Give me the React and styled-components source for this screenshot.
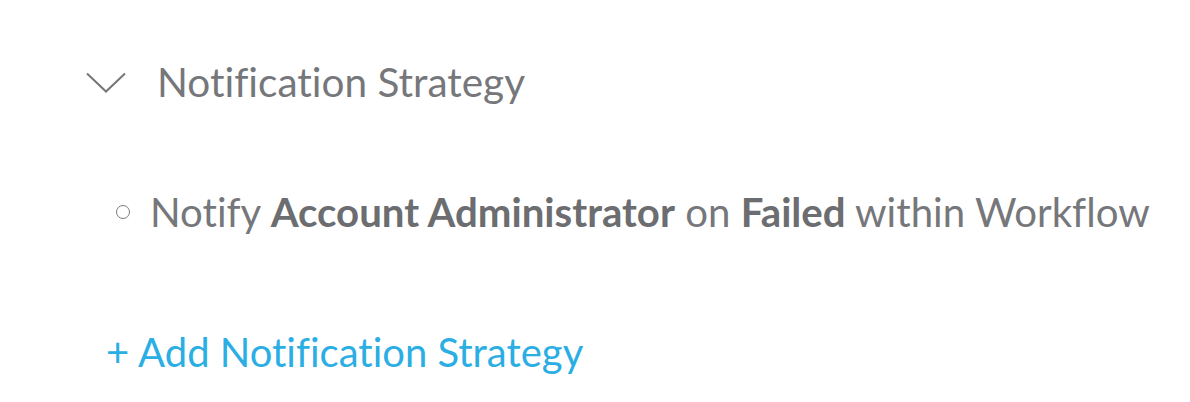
import React from 'react'
import styled, { createGlobalStyle } from 'styled-components'

const GlobalStyle = createGlobalStyle`
  html, body {
    margin: 0;
    padding: 0;
    background: #ffffff;
  }
  body {
    font-family: Lato, "Open Sans", sans-serif;
    font-variant-ligatures: none;
  }
`

const Panel = styled.div`
  width: 1190px;
  height: 402px;
  box-sizing: border-box;
  padding: 58px 0 0 86px;
  display: flex;
  flex-direction: column;
`

const Header = styled.div`
  display: flex;
  align-items: center;
  height: 48px;
`

const Chevron = styled.svg`
  width: 40px;
  height: 21px;
  margin-right: 31px;
  flex-shrink: 0;
`

const Title = styled.span`
  font-size: 40.5px;
  color: #76777b;
  line-height: 48px;
`

const StrategyList = styled.ul`
  list-style: none;
  margin: 82px 0 0 0;
  padding: 0 0 0 30px;
`

const StrategyItem = styled.li`
  display: flex;
  align-items: center;
  font-size: 40.2px;
  line-height: 48px;
  color: #76777b;
`

const Bullet = styled.span`
  box-sizing: border-box;
  width: 14px;
  height: 14px;
  border: 1.6px solid #7a7b7f;
  border-radius: 50%;
  margin-right: 20px;
  flex-shrink: 0;
`

const Strong = styled.b`
  font-weight: 700;
  color: #6c6d70;
`

const AddLink = styled.a`
  margin: 92px 0 0 20px;
  font-size: 40px;
  line-height: 48px;
  color: #2aaee3;
  text-decoration: none;
  cursor: pointer;
`

export default function App() {
  return (
    <>
      <GlobalStyle />
      <Panel>
        <Header>
          <Chevron viewBox="0 0 40 21" fill="none">
            <path d="M1 1.5 L20 19.5 L39 1.5" stroke="#76777b" strokeWidth="2" />
          </Chevron>
          <Title>Notification Strategy</Title>
        </Header>
        <StrategyList>
          <StrategyItem>
            <Bullet />
            <span>
              Notify <Strong>Account Administrator</Strong> on <Strong>Failed</Strong> within Workflow
            </span>
          </StrategyItem>
        </StrategyList>
        <AddLink>+ Add Notification Strategy</AddLink>
      </Panel>
    </>
  )
}
